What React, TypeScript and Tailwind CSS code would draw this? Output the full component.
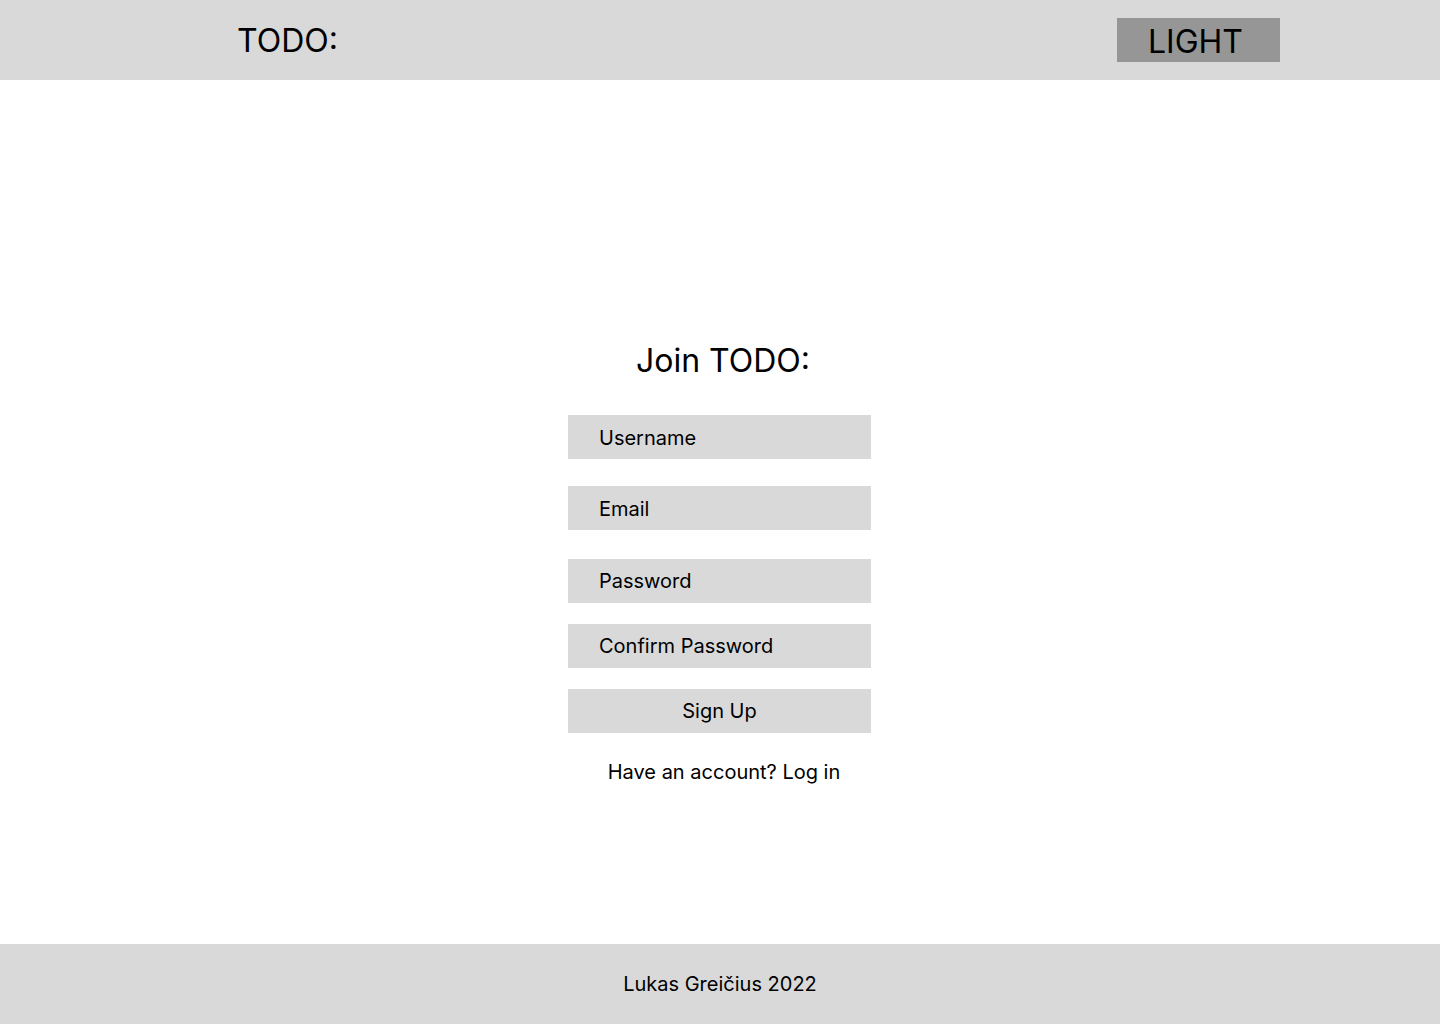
export default function App() {
  const fields = [
    { label: 'Username', mt: 'mt-[32px]', pt: 'pt-[2px]' },
    { label: 'Email', mt: 'mt-[27px]', pt: 'pt-[2px]' },
    { label: 'Password', mt: 'mt-[29px]', pt: 'pt-0' },
    { label: 'Confirm Password', mt: 'mt-[21px]', pt: 'pt-0' },
  ];

  return (
    <div className="min-h-screen flex flex-col bg-white text-black font-['Inter',sans-serif]">
      {/* Header */}
      <header className="h-[80px] bg-[#d9d9d9] flex items-center justify-between pl-[237px] pr-[160px]">
        <h1 className="text-[32px] leading-none font-normal pt-[2px]">TODO:</h1>
        <button className="w-[163px] h-[44px] bg-[#969696] flex items-center pl-[31px] pt-[4px] text-[32px] leading-none">
          LIGHT
        </button>
      </header>

      {/* Sign up form */}
      <main className="flex-1 flex flex-col items-center pt-[259px] pr-[1px]">
        <h2 className="text-[32px] leading-[44px] pl-[7px]">Join TODO:</h2>
        {fields.map((f) => (
          <div
            key={f.label}
            className={`${f.mt} ${f.pt} w-[303px] h-[44px] bg-[#d9d9d9] flex items-center pl-[31px] text-[20px]`}
          >
            {f.label}
          </div>
        ))}
        <button className="mt-[21px] w-[303px] h-[44px] bg-[#d9d9d9] flex items-center justify-center text-[20px]">
          Sign Up
        </button>
        <p className="mt-[27px] text-[20px] leading-[24px] pl-[9px]">Have an account? Log in</p>
      </main>

      {/* Footer */}
      <footer className="h-[80px] bg-[#d9d9d9] flex items-center justify-center text-[20px]">
        Lukas Greičius 2022
      </footer>
    </div>
  );
}
